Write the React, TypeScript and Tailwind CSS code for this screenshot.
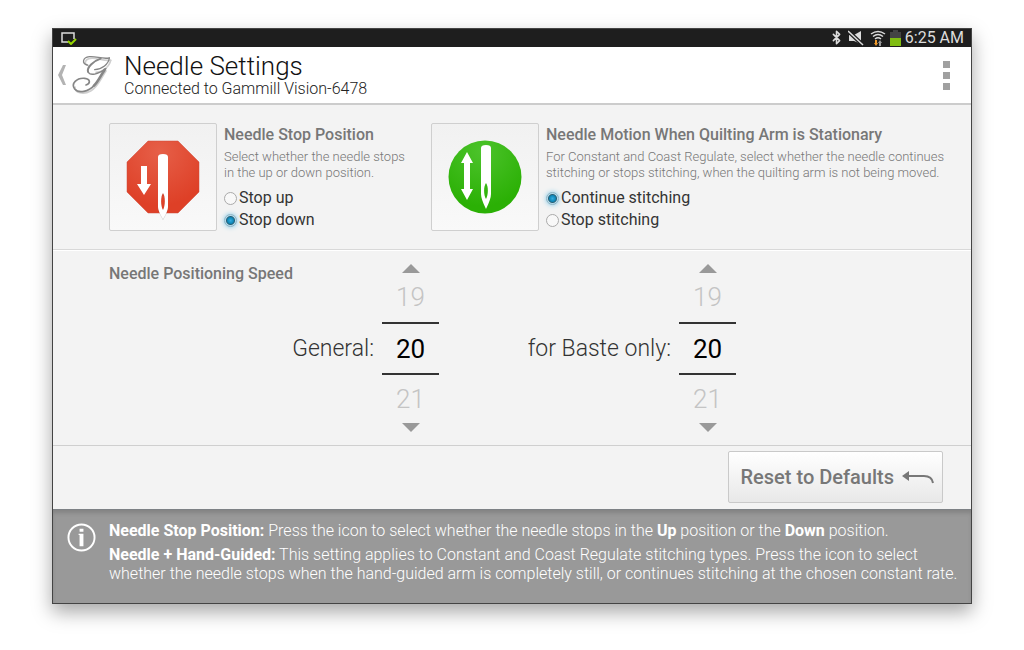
import { useState } from 'react';
import { Bluetooth } from 'lucide-react';

const DEFAULT_SPEED = 20;

function GammillLogo() {
  return (
    <svg viewBox="0 0 138 132" className="w-[46px] h-11 shrink-0" fill="none" strokeLinecap="round" aria-hidden="true">
      <g stroke="#cfcfcf" strokeWidth="5">
        <path d="M56 38C40 36 44 18 62 16c20-2 34 8 60 6" />
        <path d="M122 22c-4 20-26 36-44 36" />
        <path d="M108 54C92 76 86 100 62 114 40 126 14 120 15 102" />
      </g>
      <g stroke="#868686">
        <path strokeWidth="4" d="M52 36C34 32 38 13 58 11c22-2 36 8 60 4" />
        <path strokeWidth="4" d="M118 15c-2 18-22 34-44 35" />
        <path strokeWidth="6" d="M92 17C70 24 50 44 54 56" />
        <path strokeWidth="4" d="M54 56c6 14 30 8 54-9" />
        <path strokeWidth="8" d="M104 50C92 68 84 86 72 98" />
        <path strokeWidth="5" d="M72 98C56 116 26 122 14 108 2 92 20 74 44 76c18 2 18 16 4 20" />
      </g>
    </svg>
  );
}

function StopIcon() {
  return (
    <svg viewBox="0 0 74 86" className="w-[74px] h-[86px]" aria-hidden="true">
      <defs>
        <radialGradient id="stopFill" cx="0.45" cy="0.15" r="0.75">
          <stop offset="0" stopColor="#e65f48" />
          <stop offset="1" stopColor="#de4027" />
        </radialGradient>
        <filter id="stopShadow" x="-50%" y="-10%" width="200%" height="120%">
          <feDropShadow dx="0" dy="0.5" stdDeviation="0.7" floodOpacity="0.45" />
        </filter>
      </defs>
      <path d="M22 7h30l21 21v30L52 79H22L1 58V28z" fill="url(#stopFill)" stroke="#cf4b38" strokeWidth="0.5" />
      <path d="M15 32h6v18h4L18 61 11 50h4z" fill="#fff" />
      <path
        d="M32 23q0-3 5-3t5 3v50q0 4-5 12-5-8-5-12zM37 59c-2.500 3-2.500 13 0 17 2.500-4 2.500-14 0-17z"
        fill="#fff"
        fillRule="evenodd"
        filter="url(#stopShadow)"
      />
    </svg>
  );
}

function MotionIcon() {
  return (
    <svg viewBox="0 0 74 86" className="w-[74px] h-[86px]" aria-hidden="true">
      <defs>
        <radialGradient id="motionFill" cx="0.45" cy="0.15" r="0.75">
          <stop offset="0" stopColor="#4cc32b" />
          <stop offset="1" stopColor="#2bb005" />
        </radialGradient>
      </defs>
      <circle cx="37" cy="43" r="36.500" fill="url(#motionFill)" />
      <path d="M19 18l6 11h-3v26h3l-6 11-6-11h3V29h-3z" fill="#fff" />
      <path
        d="M33 14q0-3 5-3t5 3v46q0 5-5 15-5-10-5-15zM38 49c-2.500 3-2.500 12 0 16 2.500-4 2.500-13 0-16z"
        fill="#fff"
        fillRule="evenodd"
      />
    </svg>
  );
}

function StatusBar() {
  return (
    <div className="flex items-center h-[19px] bg-[#1e1e1e] px-2 text-[#dcdcdc]">
      <svg viewBox="0 0 18 14" className="w-[18px] h-[14px]" fill="none" aria-hidden="true">
        <path d="M8 11H2V2h12v6" stroke="#dcdcdc" strokeWidth="1.500" />
        <path d="M8 10l3 3 5-5" stroke="#95d600" strokeWidth="2" />
      </svg>
      <div className="ml-auto flex items-center">
        <Bluetooth size={15} strokeWidth={2.5} className="mr-1" />
        <svg viewBox="0 0 16 16" className="w-4 h-4 mr-1.5" aria-hidden="true">
          <path d="M1 5h5l7-4v13L6 11H1z" fill="#dcdcdc" />
          <path d="M0 1l15 14" stroke="#1e1e1e" strokeWidth="4" />
          <path d="M0 1l15 14" stroke="#dcdcdc" strokeWidth="1.500" />
        </svg>
        <svg viewBox="0 0 16 16" className="w-4 h-4 mr-1" fill="none" aria-hidden="true">
          <path d="M1 4q7-5 14 0M3 6.500q5-4 10 0M5 9q3-2.500 6 0" stroke="#dcdcdc" strokeWidth="1.500" />
          <path d="M5 10h2v3h1L6 16l-2-3h1z" fill="#f09a2a" />
          <path d="M9 16v-3H8l2-3 2 3h-1v3z" fill="#999" />
        </svg>
        <svg viewBox="0 0 11 16" className="w-[11px] h-4 mr-1" aria-hidden="true">
          <path d="M3 0h5v2h3v6H0V2h3z" fill="#444" />
          <path d="M0 8h11v8H0z" fill="#80bd12" />
        </svg>
        <span className="text-[16px] leading-[19px]">6:25 AM</span>
      </div>
    </div>
  );
}

function Header() {
  return (
    <header className="flex items-center h-[58px] bg-white border-b-2 border-[#cccccc] pl-1 pr-[18px]">
      <button type="button" aria-label="Back" className="shrink-0">
        <svg viewBox="0 0 12 24" className="w-3 h-6" aria-hidden="true">
          <path d="M10 2H7L2 12l5 10h3L6 12z" fill="#b3b3b3" />
        </svg>
      </button>
      <div className="ml-0.5">
        <GammillLogo />
      </div>
      <div className="ml-2">
        <h1 className="text-[26px] leading-[28px] font-light text-[#111]">Needle Settings</h1>
        <p className="text-[16px] leading-[18px] font-light text-[#222]">Connected to Gammill Vision-6478</p>
      </div>
      <button type="button" aria-label="More options" className="ml-auto flex flex-col gap-1 px-1">
        <span className="w-[7px] h-[7px] bg-[#a0a0a0]" />
        <span className="w-[7px] h-[7px] bg-[#a0a0a0]" />
        <span className="w-[7px] h-[7px] bg-[#a0a0a0]" />
      </button>
    </header>
  );
}

type OptionProps = { name: string; label: string; checked: boolean; onSelect: () => void };

function Option({ name, label, checked, onSelect }: OptionProps) {
  return (
    <label className="flex items-center gap-0.5 text-[16px] leading-[22px] text-[#333]">
      <input
        type="radio"
        name={name}
        checked={checked}
        onChange={onSelect}
        className="appearance-none w-[13px] h-[13px] rounded-full border border-[#aaa] bg-[#f8f8f8] checked:border-[#8fb4c4] checked:bg-[radial-gradient(circle_at_50%_50%,#35ade0_0,#0d86b6_3px,#2a6076_4px,#b5dcec_5px)] checked:shadow-[0_0_5px_#7cc8e8]"
      />
      {label}
    </label>
  );
}

type SettingProps = {
  icon: React.ReactNode;
  title: string;
  description: string;
  options: string[];
  initial: number;
};

function Setting({ icon, title, description, options, initial }: SettingProps) {
  const [selected, setSelected] = useState(initial);
  return (
    <fieldset aria-label={title} className="flex gap-[7px] min-w-0">
      <button
        type="button"
        aria-label={`Toggle ${title}`}
        onClick={() => setSelected((selected + 1) % options.length)}
        className="grid place-items-center shrink-0 w-[108px] h-[108px] rounded-[2px] border border-[#cfcfcf] bg-linear-to-b from-[#f1f1f1] to-[#f9f9f9]"
      >
        {icon}
      </button>
      <div>
        <h2 className="text-[16px] leading-[24px] font-medium text-[#777]">{title}</h2>
        <p className="mt-0.5 text-[13px] leading-[16px] font-light text-[#777]">{description}</p>
        <div className="mt-1.5">
          {options.map((label, i) => (
            <Option
              key={label}
              name={title}
              label={label}
              checked={selected === i}
              onSelect={() => setSelected(i)}
            />
          ))}
        </div>
      </div>
    </fieldset>
  );
}

type PickerProps = { id: string; label: string; value: number; onChange: (value: number) => void };

function SpeedPicker({ id, label, value, onChange }: PickerProps) {
  return (
    <div className="flex items-center justify-end gap-2">
      <label htmlFor={id} className="text-[23px] leading-[28px] font-light text-[#333] whitespace-nowrap">
        {label}
      </label>
      <div className="flex flex-col items-center shrink-0 w-[57px] text-[26px]">
        <button type="button" aria-label={`${label} lower`} onClick={() => onChange(value - 1)} className="h-[14px]">
          <svg viewBox="0 0 18 10" className="w-[18px] h-[10px]" aria-hidden="true">
            <path d="M9 0l9 9H0z" fill="#999" />
          </svg>
        </button>
        <span className="flex items-center h-[46px] pb-1 font-light text-[#c4c4c4]">{value - 1}</span>
        <input
          id={id}
          inputMode="numeric"
          value={value}
          onChange={(e) => onChange(Number(e.target.value) || 0)}
          className="w-full h-[53px] border-y-2 border-[#333] bg-transparent text-center text-black outline-none"
        />
        <span className="flex items-center h-[46px] pt-0.5 font-light text-[#c4c4c4]">{value + 1}</span>
        <button type="button" aria-label={`${label} higher`} onClick={() => onChange(value + 1)} className="h-[14px]">
          <svg viewBox="0 0 18 10" className="w-[18px] h-[10px]" aria-hidden="true">
            <path d="M0 0h18l-9 9z" fill="#999" />
          </svg>
        </button>
      </div>
    </div>
  );
}

function HelpFooter() {
  return (
    <footer className="flex gap-[13px] pl-[15px] pr-2 pt-[11px] pb-[21px] bg-[#999] border-t border-[#7d8185] shadow-[inset_0_3px_4px_rgba(0,0,0,0.15)] text-white">
      <svg viewBox="0 0 30 30" className="w-[29px] h-[29px] mt-0.5 shrink-0" fill="none" aria-hidden="true">
        <circle cx="15" cy="15" r="13.500" stroke="#fff" strokeWidth="2" />
        <path d="M13 6h4v3h-4zM12 11h5v13h-4V12.500h-1z" fill="#fff" />
      </svg>
      <div className="text-[16px] leading-[19px] font-light">
        <p>
          <b className="font-bold">Needle Stop Position:</b> Press the icon to select whether the needle stops in the{' '}
          <b className="font-bold">Up</b> position or the <b className="font-bold">Down</b> position.
        </p>
        <p className="mt-[5px]">
          <b className="font-bold">Needle + Hand-Guided:</b> This setting applies to Constant and Coast Regulate
          stitching types. Press the icon to select whether the needle stops when the hand-guided arm is completely
          still, or continues stitching at the chosen constant rate.
        </p>
      </div>
    </footer>
  );
}

export default function App() {
  const [general, setGeneral] = useState(DEFAULT_SPEED);
  const [baste, setBaste] = useState(DEFAULT_SPEED);

  const reset = () => {
    setGeneral(DEFAULT_SPEED);
    setBaste(DEFAULT_SPEED);
  };

  return (
    <div className="min-h-screen bg-white px-[52px] pt-7 pb-11 font-['Roboto',sans-serif]">
      <div className="bg-[#f3f3f3] outline -outline-offset-1 outline-[#444] shadow-[0_8px_18px_rgba(0,0,0,0.35)]">
        <StatusBar />
        <Header />
        <main>
          <section className="grid grid-cols-[302px_1fr] gap-5 pl-[57px] pr-6 py-[18px] border-b border-[#d8d8d8]">
            <Setting
              icon={<StopIcon />}
              title="Needle Stop Position"
              description="Select whether the needle stops in the up or down position."
              options={['Stop up', 'Stop down']}
              initial={1}
            />
            <Setting
              icon={<MotionIcon />}
              title="Needle Motion When Quilting Arm is Stationary"
              description="For Constant and Coast Regulate, select whether the needle continues stitching or stops stitching, when the quilting arm is not being moved."
              options={['Continue stitching', 'Stop stitching']}
              initial={0}
            />
          </section>
          <section className="flex pl-[57px] pt-[11px] pb-2.5 border-t border-white border-b border-b-[#cfcfcf]">
            <h2 className="w-[183px] shrink-0 text-[16px] leading-[24px] font-medium text-[#777] whitespace-nowrap">
              Needle Positioning Speed
            </h2>
            <div className="grid grid-cols-[147px_297px]">
              <SpeedPicker id="general" label="General:" value={general} onChange={setGeneral} />
              <SpeedPicker id="baste" label="for Baste only:" value={baste} onChange={setBaste} />
            </div>
          </section>
          <div className="flex justify-end pr-[29px] pt-[5px] pb-1.5">
            <button
              type="button"
              onClick={reset}
              className="flex items-center gap-2 h-[52px] pl-3 pr-2 rounded-[2px] border border-[#c9c9c9] bg-linear-to-b from-white to-[#e8e8e8] text-[20px] font-medium text-[#777]"
            >
              Reset to Defaults
              <svg viewBox="0 0 32 16" className="w-8 h-4" fill="none" aria-hidden="true">
                <path d="M0 7l7-5v10z" fill="#777" />
                <path d="M5 7h17q8 0 9 7" stroke="#777" strokeWidth="2" />
              </svg>
            </button>
          </div>
        </main>
        <HelpFooter />
      </div>
    </div>
  );
}
